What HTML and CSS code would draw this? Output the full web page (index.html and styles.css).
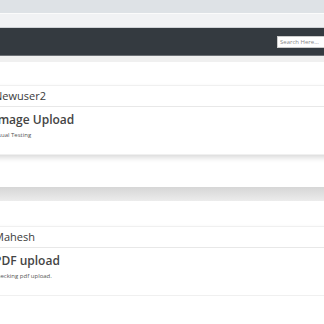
FILE: index.html
```html
<!DOCTYPE html>
<html lang="en">

<head>
    <meta charset="UTF-8">
    <meta name="viewport" content="width=device-width, initial-scale=1.0">
    <title>Posts</title>
    <link rel="stylesheet" href="styles.css">
</head>

<body>
    <div class="topbar"></div>
    <div class="tabbar"></div>
    <nav class="navbar">
        <input type="text" class="search" placeholder="Search Here...">
    </nav>
    <div class="subbar"></div>

    <div class="feed">
        <div class="card first">
            <div class="card-header">Newuser2</div>
            <div class="card-body">
                <h5 class="card-title">Image Upload</h5>
                <p class="card-text">Visual Testing</p>
            </div>
        </div>

        <div class="divider"></div>

        <div class="card">
            <div class="card-header">Mahesh</div>
            <div class="card-body">
                <h5 class="card-title">PDF upload</h5>
                <p class="card-text">Checking pdf upload.</p>
            </div>
        </div>
    </div>
</body>

</html>
```

FILE: styles.css
```css
body {
    margin: 0;
    font-family: "Open Sans", "Noto Sans", Arial, sans-serif;
    background-color: white;
    color: #333;
    overflow: hidden;
}

.topbar {
    height: 13px;
    background-color: #dee2e6;
}

.tabbar {
    height: 13px;
    background-color: #f1f2f4;
    border-top: 1px solid #fbfbfb;
    border-bottom: 1px solid #cfd2d6;
}

.navbar {
    height: 27px;
    background-color: #343a40;
    border-bottom: 1px solid #6c7075;
    display: flex;
    align-items: center;
    justify-content: flex-end;
}

.search {
    width: 50px;
    height: 12px;
    box-sizing: border-box;
    margin-right: -3px;
    padding: 0 2px;
    font-family: inherit;
    font-size: 6px;
    border: 1px solid #ccc;
    background-color: white;
}

.search::placeholder {
    color: #888;
}

.subbar {
    height: 6px;
    background-color: #f0f0f0;
}

.feed {
    margin-left: -17px;
    width: calc(100% + 40px);
}

.card {
    background-color: white;
    border: 1px solid #f0f0f0;
    box-shadow: 0 3px 5px rgba(0, 0, 0, 0.14);
}

.card.first {
    margin-top: 23px;
}

.card-header {
    padding: 4px 10px;
    font-size: 11px;
    line-height: 12px;
    color: #3a3a3a;
    border-bottom: 1px solid #e8e8e8;
}

.card-body {
    padding: 5px 10px 15px;
}

.card-title {
    margin: 0;
    font-size: 12px;
    line-height: 16px;
    font-weight: 600;
    color: #444;
}

.card-text {
    margin: 3px 0 0 -1px;
    font-size: 6px;
    line-height: 8px;
    color: #555;
}

.divider {
    height: 14px;
    margin: 32px 0 25px;
    background: linear-gradient(#d6d6d6, #ececec);
}
```
